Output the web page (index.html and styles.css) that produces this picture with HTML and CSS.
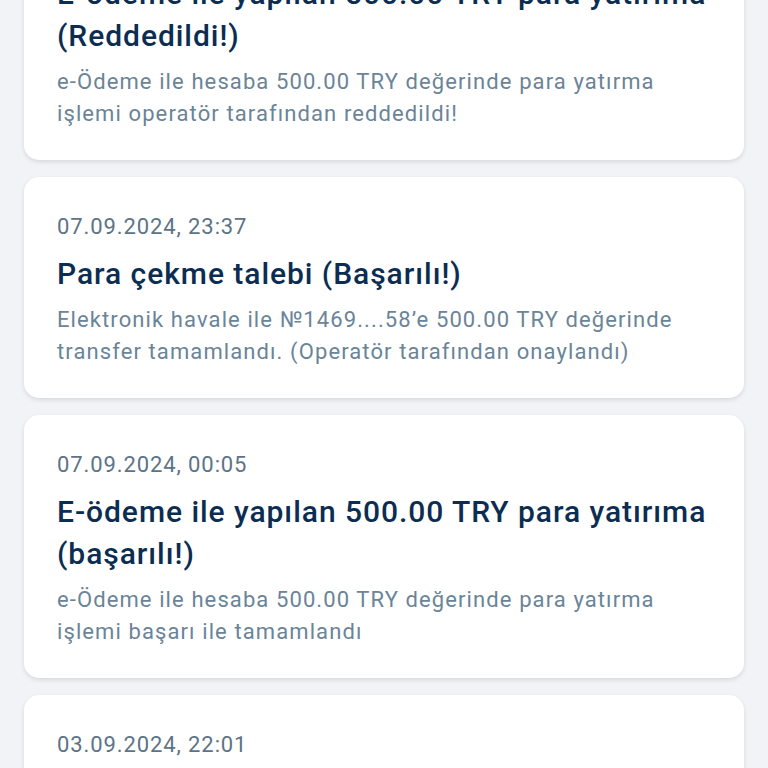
FILE: index.html
```html
<!DOCTYPE html>
<html lang="tr">
<head>
<meta charset="utf-8">
<title>İşlemler</title>
<link rel="stylesheet" href="styles.css">
</head>
<body>
<main class="feed">
  <article class="card">
    <div class="date">08.09.2024, 10:12</div>
    <h2 class="title">E-ödeme ile yapılan 500.00 TRY para yatırıma (Reddedildi!)</h2>
    <p class="desc">e-Ödeme ile hesaba 500.00 TRY değerinde para yatırma işlemi operatör tarafından reddedildi!</p>
  </article>
  <article class="card">
    <div class="date">07.09.2024, 23:37</div>
    <h2 class="title">Para çekme talebi (Başarılı!)</h2>
    <p class="desc">Elektronik havale ile №1469....58’e 500.00 TRY değerinde transfer tamamlandı. (Operatör tarafından onaylandı)</p>
  </article>
  <article class="card">
    <div class="date">07.09.2024, 00:05</div>
    <h2 class="title">E-ödeme ile yapılan 500.00 TRY para yatırıma (başarılı!)</h2>
    <p class="desc">e-Ödeme ile hesaba 500.00 TRY değerinde para yatırma işlemi başarı ile tamamlandı</p>
  </article>
  <article class="card">
    <div class="date">03.09.2024, 22:01</div>
    <h2 class="title">Para çekme talebi (Başarılı!)</h2>
    <p class="desc">Elektronik havale ile №1469....58’e 500.00 TRY değerinde transfer tamamlandı. (Operatör tarafından onaylandı)</p>
  </article>
</main>
</body>
</html>
```

FILE: styles.css
```css
html, body {
  margin: 0;
  padding: 0;
  background: #f1f3f6;
  font-family: Roboto, "Noto Sans", sans-serif;
  overflow: hidden;
}
.feed {
  display: flex;
  flex-direction: column;
  gap: 17px;
  padding: 0 24px;
  margin-top: -103px;
}
.card {
  background: #ffffff;
  border-radius: 15px;
  box-shadow: 0 2px 4px rgba(30, 45, 70, 0.13);
  padding: 36px 33px 30px;
  display: flex;
  flex-direction: column;
}
.date {
  font-size: 22px;
  line-height: 28px;
  letter-spacing: 0.9px;
  color: #5d7386;
  margin-bottom: 12px;
}
.title {
  margin: 0 0 9px;
  font-size: 30px;
  line-height: 42px;
  font-weight: 500;
  letter-spacing: 0.95px;
  color: #0c2d52;
}
.desc {
  margin: 0;
  font-size: 22px;
  line-height: 32px;
  letter-spacing: 1.1px;
  color: #6a8498;
}
```
